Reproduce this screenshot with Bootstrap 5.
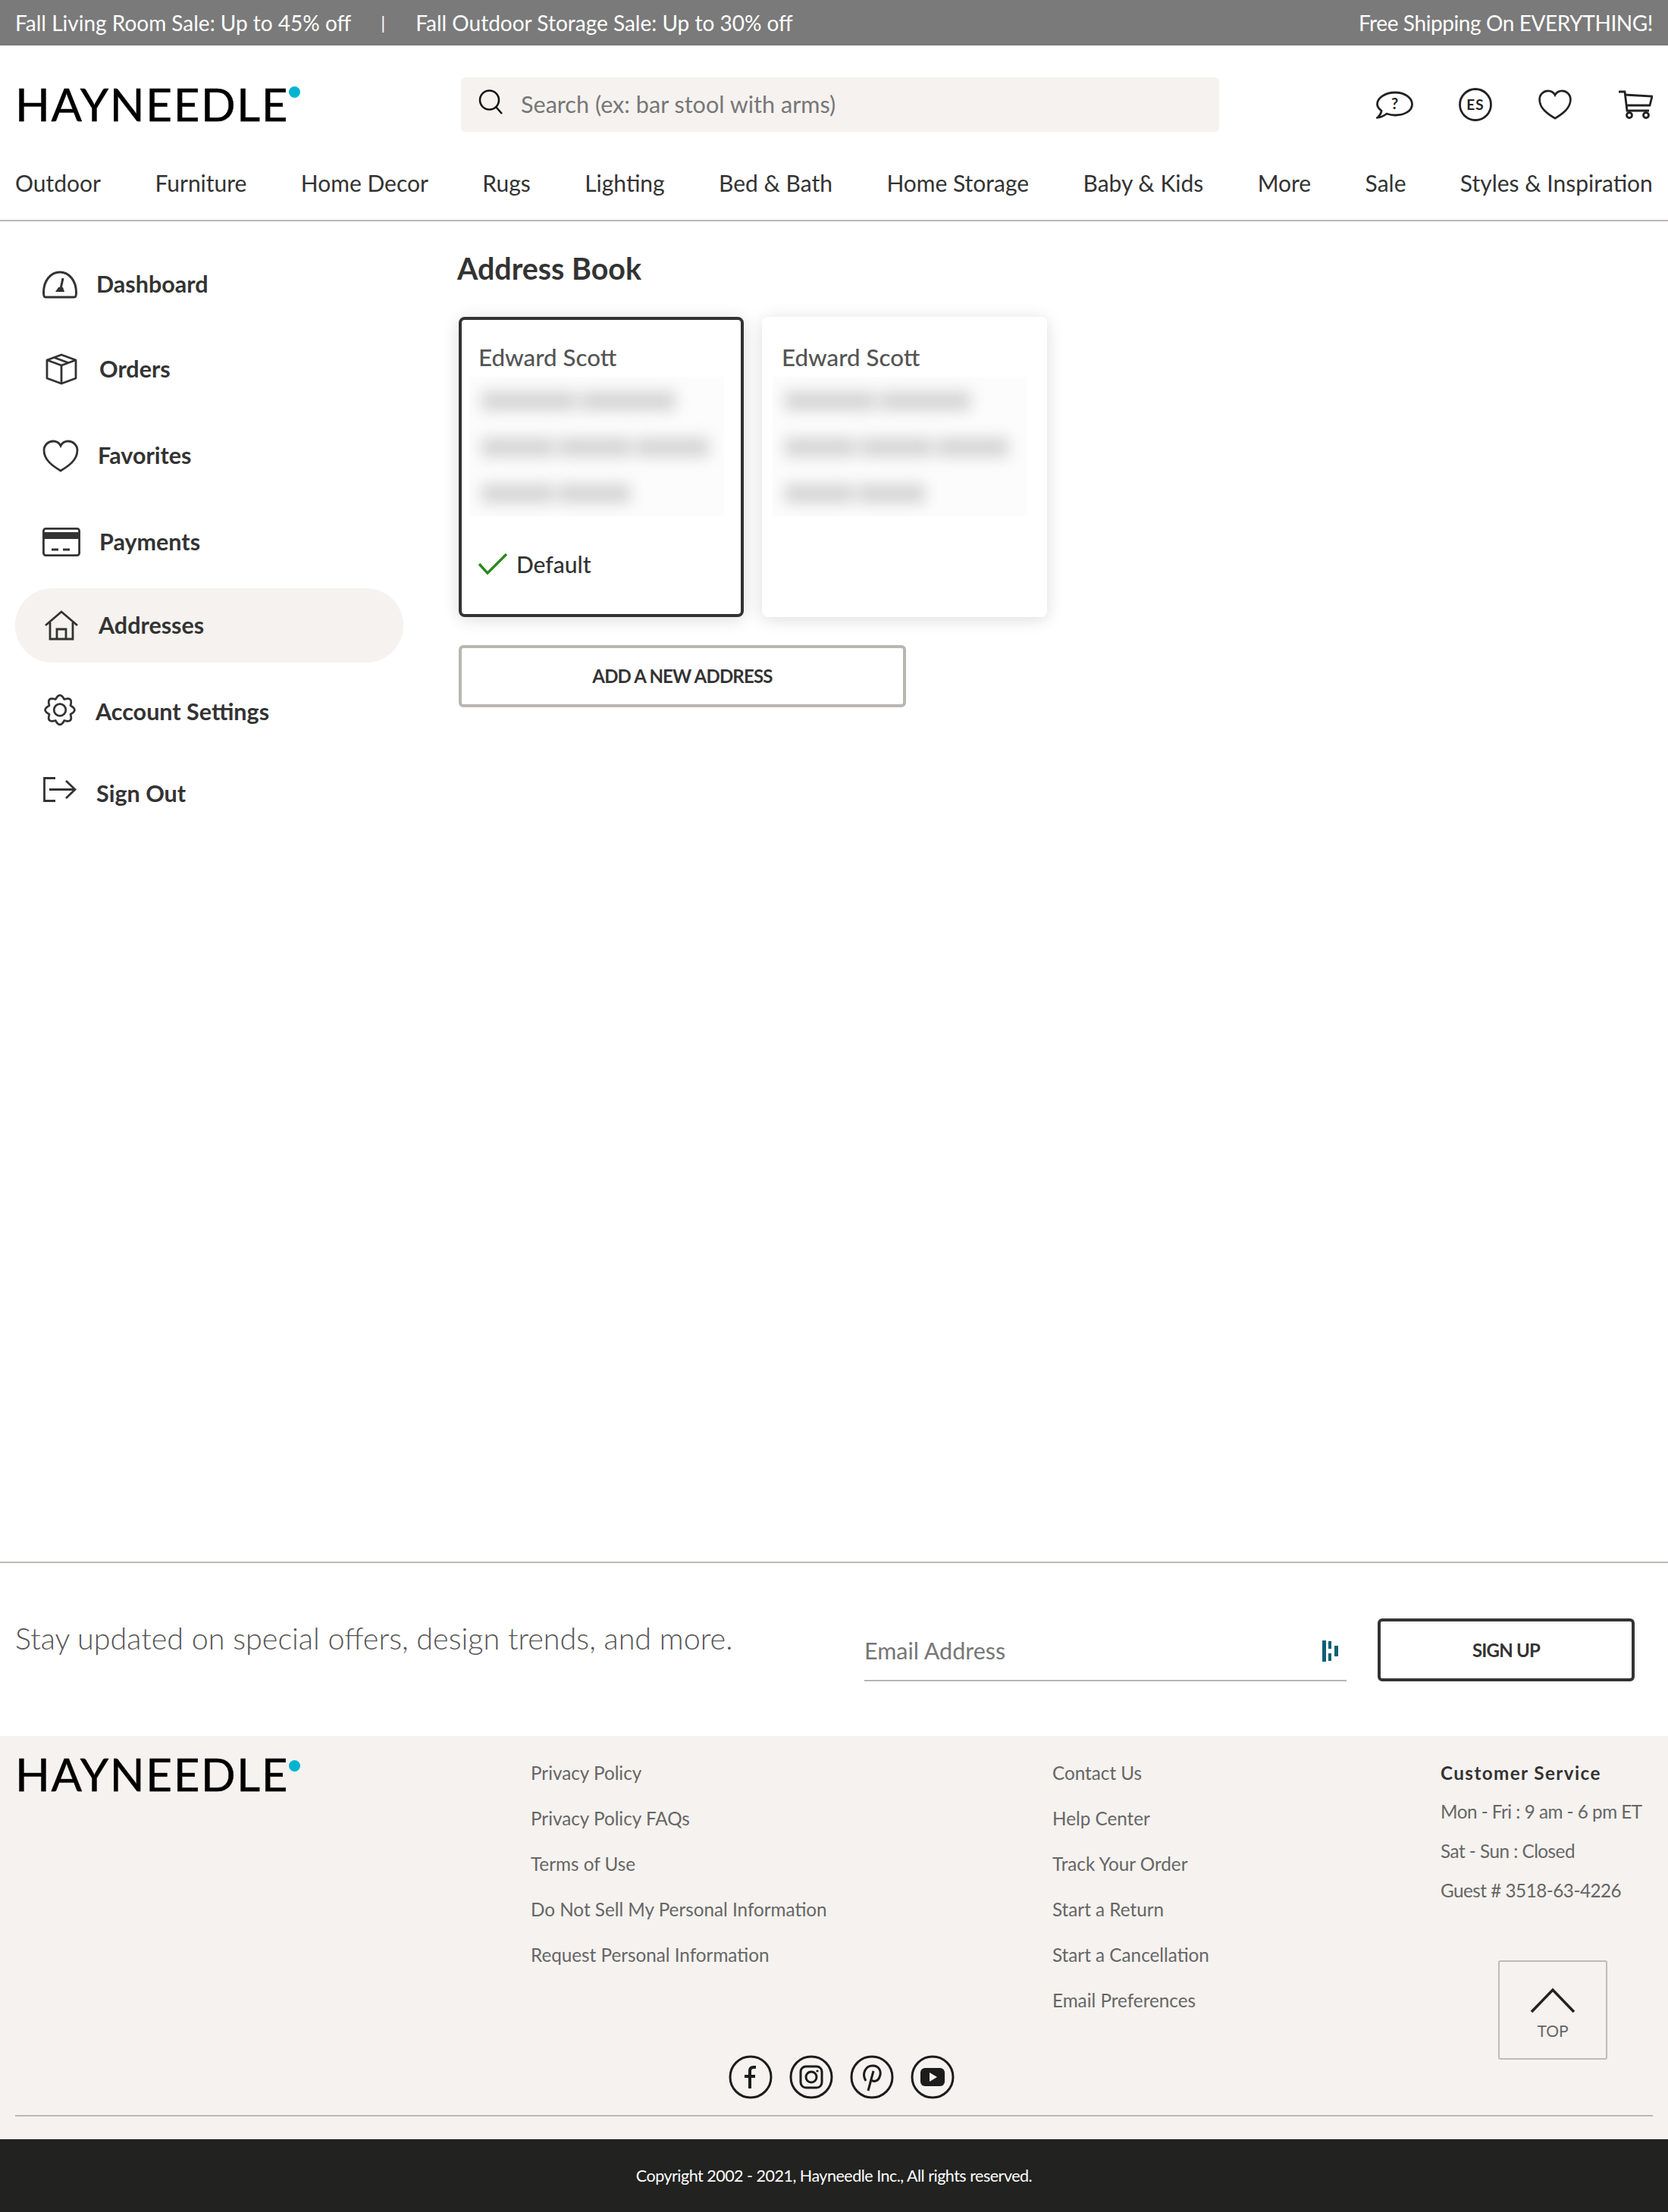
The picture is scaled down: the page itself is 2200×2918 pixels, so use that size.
<!DOCTYPE html>
<html lang="en">
<head>
  <meta charset="UTF-8" />
  <meta name="viewport" content="width=device-width, initial-scale=1">
  <title>Hayneedle - Address Book</title>
  <link href="https://cdn.jsdelivr.net/npm/bootstrap@5.3.0/dist/css/bootstrap.min.css" rel="stylesheet">
  <style>
    body {
      font-family: Lato, "Noto Sans", sans-serif;
      color: #333;
      background: #fff;
    }
    a { color: inherit; text-decoration: none; }
    .promoBar {
      height: 60px;
      padding: 0 20px;
      background: #7a7a7a;
      color: #fff;
      font-size: 28px;
    }
    .promoSep { margin: 0 40px 0 39px; font-size: 24px; }
    .promoRight { letter-spacing: -.4px; }
    .logoText {
      font-size: 60px;
      line-height: 60px;
      color: #000;
      letter-spacing: 1.7px;
      white-space: nowrap;
      -webkit-text-stroke: .5px #000;
    }
    .logoDot {
      width: 15px;
      height: 15px;
      border-radius: 50%;
      background: #00b4d0;
      margin: 12px 0 0 0;
      flex: none;
    }
    .headerRow { height: 156px; padding: 42px 20px 42px 20px; }
    .logoBox { width: 588px; height: 72px; }
    .logoBox .logoText { margin-top: -2px; }
    .searchBox {
      width: 1000px;
      height: 72px;
      padding-left: 23px;
      background: #f5f2ef;
      border-radius: 6px;
      color: #777;
      font-size: 30.6px;
    }
    .searchBox svg { margin-right: 23px; margin-top: -8px; }
    .headerIcons { margin-left: auto; gap: 60px; }
    .mainNav {
      height: 76px;
      padding: 0 20px 24px 20px;
      border-bottom: 2px solid #bdb8b3;
      font-size: 30px;
      color: #333;
    }
    .pageBody { min-height: 1768px; }
    .sideMenu { width: 603px; padding: 34px 0 0 20px; flex: none; }
    .sideItem {
      width: 512px;
      height: 98px;
      padding-left: 36px;
      border-radius: 49px;
      font-size: 30.5px;
      font-weight: 700;
      color: #333;
    }
    .sideItem svg { flex: none; }
    .sideItem.isActive { background: #f5f2ef; }
    .sideItem:nth-child(1) svg { margin-right: 25px; }
    .sideItem:nth-child(2) { margin-top: 14px; padding-left: 40px; }
    .sideItem:nth-child(2) svg { margin-right: 29px; }
    .sideItem:nth-child(3) { margin-top: 16px; }
    .sideItem:nth-child(3) svg { margin-right: 25px; }
    .sideItem:nth-child(4) { margin-top: 16px; }
    .sideItem:nth-child(4) svg { margin-right: 25px; }
    .sideItem:nth-child(5) { margin-top: 12px; padding-left: 39px; }
    .sideItem:nth-child(5) svg { margin-right: 27px; }
    .sideItem:nth-child(6) { margin-top: 16px; }
    .sideItem:nth-child(6) svg { margin: -6px 24px 0 0; }
    .sideItem:nth-child(7) { margin-top: 10px; padding-left: 37px; }
    .sideItem:nth-child(7) svg { margin: -12px 26px 0 0; }
    .bookPane { padding-top: 38px; }
    .bookTitle {
      font-size: 39.4px;
      line-height: 48px;
      font-weight: 700;
      color: #333;
      margin: 0 0 40px 0;
    }
    .cardRow { padding-left: 2px; }
    .addrCard {
      width: 376px;
      height: 396px;
      padding: 29px 22px 0 22px;
      border: 4px solid transparent;
      border-radius: 8px;
      background: #fff;
      box-shadow: 0 3px 22px rgba(0, 0, 0, .14);
    }
    .addrCard.isDefault { border-color: #333; }
    .addrName {
      font-size: 31.3px;
      line-height: 40px;
      font-weight: 500;
      color: #555;
    }
    .addrBlur {
      height: 184px;
      margin: 6px 0 0 -12px;
      padding: 20px 0 0 16px;
      background: #fcfcfc;
      overflow: hidden;
    }
    .blurLine {
      height: 24px;
      margin-bottom: 37px;
      gap: 6px;
      filter: blur(10px);
    }
    .blurLine span { background: #d2d2d2; }
    .lineA { width: 256px; }
    .lineB { width: 300px; }
    .lineC { width: 196px; }
    .lineD { width: 245px; }
    .lineE { width: 295px; }
    .lineF { width: 185px; }
    .defaultMark {
      margin-top: 43px;
      font-size: 30px;
      line-height: 40px;
      font-weight: 500;
      color: #333;
    }
    .defaultMark svg { margin-right: 12px; }
    .plainBtn {
      font-size: 24px;
      letter-spacing: -.8px;
      font-weight: 700;
      color: #333;
      background: #fff;
      border-radius: 6px;
    }
    .addBtn {
      width: 590px;
      height: 82px;
      margin: 37px 0 0 2px;
      border: 4px solid #b9b6b2;
    }
    .newsBand {
      height: 230px;
      padding: 73px 44px 0 20px;
      border-top: 2px solid #bdb8b3;
    }
    .newsText {
      width: 1120px;
      font-size: 39.5px;
      line-height: 52px;
      font-weight: 300;
      color: #555;
      white-space: nowrap;
    }
    .emailField {
      width: 636px;
      height: 83px;
      padding: 5px 11px 0 0;
      border-bottom: 2px solid #b5b5b5;
      font-size: 30.5px;
      color: #777;
    }
    .signBtn {
      width: 339px;
      height: 83px;
      margin-left: 41px;
      border: 4px solid #333;
    }
    .footBand {
      height: 532px;
      padding: 19px 20px 0 20px;
      background: #f5f2ef;
    }
    .footCols {
      display: grid;
      grid-template-columns: 680px 688px 512px 1fr;
      height: 360px;
    }
    .footCols > div:first-child { padding-top: 1px; }
    .footLinks { font-size: 24.25px; line-height: 60px; color: #666; }
    .careBox {
      padding-top: 5px;
      font-size: 24.25px;
      line-height: 52px;
      letter-spacing: -.5px;
      color: #666;
      white-space: nowrap;
    }
    .careTitle { line-height: 50px; font-weight: 700; color: #333; letter-spacing: 1.4px; }
    .topBtn {
      position: absolute;
      left: 1976px;
      top: 296px;
      width: 144px;
      height: 131px;
      padding-top: 34px;
      border: 2px solid #c0bcb8;
      border-radius: 3px;
      font-size: 21px;
      line-height: 30px;
      color: #666;
    }
    .socialRow { margin-top: 41px; padding-left: 20px; gap: 22px; }
    .footRule {
      height: 2px;
      margin-top: 20px;
      background: #bdb8b3;
    }
    .copyBar {
      height: 96px;
      background: #222220;
      color: #fff;
      font-size: 21.5px;
      letter-spacing: -.5px;
    }
    svg { display: block; }
    svg text { font-family: Lato, sans-serif; }
  </style>
</head>
<body>
  <div class="promoBar d-flex align-items-center justify-content-between">
    <div class="d-flex align-items-center">
      <span>Fall Living Room Sale: Up to 45% off</span>
      <span class="promoSep">|</span>
      <span>Fall Outdoor Storage Sale: Up to 30% off</span>
    </div>
    <span class="promoRight">Free Shipping On EVERYTHING!</span>
  </div>

  <header>
    <div class="headerRow d-flex align-items-center">
      <div class="logoBox d-flex align-items-center">
        <span class="logoText">HAYNEEDLE</span><span class="logoDot align-self-start"></span>
      </div>
      <div class="searchBox d-flex align-items-center">
        <svg width="33" height="33" viewBox="0 0 33 33" fill="none" stroke="#111" stroke-width="2.5"><circle cx="14.5" cy="14" r="12.5"/><path d="M23.5 23.5 L31 32"/></svg>
        <span>Search (ex: bar stool with arms)</span>
      </div>
      <div class="headerIcons d-flex align-items-center">
        <svg width="49" height="37" viewBox="0 0 49 37" fill="none" stroke="#222" stroke-width="2.8"><path d="M25 2 C38 2 47.5 9 47.5 17.5 C47.5 26 38 32 25 32 C20 32 17 31 14 30 C10 33 6 35 2 35 C5 32 7 29 7 26 C3 23 1.5 20 1.5 17.5 C1.5 9 12 2 25 2 Z"/><text x="24.5" y="24" text-anchor="middle" font-size="20" font-weight="700" fill="#222" stroke="none">?</text></svg>
        <svg width="44" height="44" viewBox="0 0 44 44" fill="none" stroke="#222" stroke-width="2.8"><circle cx="22" cy="22" r="20.5"/><text x="22" y="29" text-anchor="middle" font-size="19" font-weight="700" fill="#222" stroke="none" letter-spacing="1">ES</text></svg>
        <svg width="46" height="40" viewBox="0 0 48 43" fill="none" stroke="#222" stroke-width="2.8"><path d="M24 41 C14 35 2 27 2 14 C2 7 8 2 14 2 C18 2 22 4 24 8 C26 4 30 2 34 2 C40 2 46 7 46 14 C46 27 34 35 24 41 Z"/></svg>
        <svg width="46" height="38" viewBox="0 0 46 38" fill="none" stroke="#222" stroke-width="2.8"><path d="M1 2 L9 2 L12 27 L41 27"/><path d="M9 6 L45 8 L42 20 L11 20"/><circle cx="15" cy="33" r="3.5"/><circle cx="37" cy="33" r="3.5"/></svg>
      </div>
    </div>
    <nav class="mainNav d-flex align-items-center justify-content-between">
      <a href="#">Outdoor</a>
      <a href="#">Furniture</a>
      <a href="#">Home Decor</a>
      <a href="#">Rugs</a>
      <a href="#">Lighting</a>
      <a href="#">Bed &amp; Bath</a>
      <a href="#">Home Storage</a>
      <a href="#">Baby &amp; Kids</a>
      <a href="#">More</a>
      <a href="#">Sale</a>
      <a href="#">Styles &amp; Inspiration</a>
    </nav>
  </header>

  <main class="pageBody d-flex">
    <aside class="sideMenu">
      <a href="#" class="sideItem d-flex align-items-center">
        <svg width="46" height="37" viewBox="0 0 46 37" fill="none" stroke="#333" stroke-width="3"><path d="M4 35 H42 Q44.5 35 44.5 29 C44.5 13 35 2 23 2 C11 2 1.5 13 1.5 29 Q1.5 35 4 35 Z"/><path d="M27 10 L24 24"/><path d="M17 28 H29 L27 22 H21 Z" fill="#333" stroke="none"/></svg>
        <span>Dashboard</span>
      </a>
      <a href="#" class="sideItem d-flex align-items-center">
        <svg width="42" height="42" viewBox="0 0 42 42" fill="none" stroke="#333" stroke-width="2.8" stroke-linejoin="round"><path d="M21 2 L40 9 V33 L21 40 L2 33 V9 Z"/><path d="M2 9 L21 16 L40 9"/><path d="M21 16 V40"/><path d="M11 5.5 L30 12.5"/></svg>
        <span>Orders</span>
      </a>
      <a href="#" class="sideItem d-flex align-items-center">
        <svg width="48" height="43" viewBox="0 0 48 43" fill="none" stroke="#333" stroke-width="2.8"><path d="M24 41 C14 35 2 27 2 14 C2 7 8 2 14 2 C18 2 22 4 24 8 C26 4 30 2 34 2 C40 2 46 7 46 14 C46 27 34 35 24 41 Z"/></svg>
        <span>Favorites</span>
      </a>
      <a href="#" class="sideItem d-flex align-items-center">
        <svg width="50" height="38" viewBox="0 0 50 38" fill="none" stroke="#333" stroke-width="2.8"><rect x="1.4" y="1.4" width="47.2" height="35.2" rx="3"/><rect x="1" y="6" width="48" height="9" fill="#333" stroke="none"/><path d="M12 29 H21 M27 29 H36"/></svg>
        <span>Payments</span>
      </a>
      <a href="#" class="sideItem isActive d-flex align-items-center">
        <svg width="44" height="40" viewBox="0 0 44 40" fill="none" stroke="#333" stroke-width="2.8"><path d="M1 20 L22 2 L43 20"/><path d="M7 16 V38 H37 V16"/><path d="M16 38 V25 H28 V38"/></svg>
        <span>Addresses</span>
      </a>
      <a href="#" class="sideItem d-flex align-items-center">
        <svg width="46" height="47" viewBox="-2 -2 50 50" fill="none" stroke="#333" stroke-width="3" stroke-linejoin="round"><path d="M38.2 16.7 Q50 23 38.2 29.3 Q42.1 42.1 29.3 38.2 Q23 50 16.7 38.2 Q3.9 42.1 7.8 29.3 Q-4 23 7.8 16.7 Q3.9 3.9 16.7 7.8 Q23 -4 29.3 7.8 Q42.1 3.9 38.2 16.7 Z"/><circle cx="23" cy="23" r="8.5"/></svg>
        <span>Account Settings</span>
      </a>
      <a href="#" class="sideItem d-flex align-items-center">
        <svg width="44" height="33" viewBox="0 0 44 33" fill="none" stroke="#333" stroke-width="2.8"><path d="M16 1.5 H1.5 V31.5 H16"/><path d="M8 16.5 H42"/><path d="M30 5 L42 16.5 L30 28"/></svg>
        <span>Sign Out</span>
      </a>
    </aside>

    <section class="bookPane">
      <h1 class="bookTitle">Address Book</h1>
      <div class="cardRow d-flex gap-4">
        <div class="addrCard isDefault">
          <div class="addrName">Edward Scott</div>
          <div class="addrBlur">
            <div class="blurLine lineA d-flex"><span class="flex-grow-1"></span><span class="flex-grow-1"></span></div>
            <div class="blurLine lineB d-flex"><span class="flex-grow-1"></span><span class="flex-grow-1"></span><span class="flex-grow-1"></span></div>
            <div class="blurLine lineC d-flex"><span class="flex-grow-1"></span><span class="flex-grow-1"></span></div>
          </div>
          <div class="defaultMark d-flex align-items-center">
            <svg width="38" height="28" viewBox="0 0 38 28" fill="none" stroke="#2a8a1e" stroke-width="3.4"><path d="M1 14 L12 26 L37 1"/></svg>
            <span>Default</span>
          </div>
        </div>
        <div class="addrCard">
          <div class="addrName">Edward Scott</div>
          <div class="addrBlur">
            <div class="blurLine lineD d-flex"><span class="flex-grow-1"></span><span class="flex-grow-1"></span></div>
            <div class="blurLine lineE d-flex"><span class="flex-grow-1"></span><span class="flex-grow-1"></span><span class="flex-grow-1"></span></div>
            <div class="blurLine lineF d-flex"><span class="flex-grow-1"></span><span class="flex-grow-1"></span></div>
          </div>
        </div>
      </div>
      <button type="button" class="plainBtn addBtn d-block">ADD A NEW ADDRESS</button>
    </section>
  </main>

  <section class="newsBand d-flex align-items-start">
    <div class="newsText">Stay updated on special offers, design trends, and more.</div>
    <div class="emailField d-flex align-items-center justify-content-between">
      <span>Email Address</span>
      <svg width="21" height="28" viewBox="0 0 21 28" fill="#0d6073"><rect x="0" y="0" width="5" height="28"/><rect x="8" y="1" width="4" height="10"/><rect x="8" y="17" width="4" height="10"/><rect x="16" y="7" width="5" height="14"/></svg>
    </div>
    <button type="button" class="plainBtn signBtn">SIGN UP</button>
  </section>

  <footer>
    <div class="footBand position-relative">
      <div class="footCols">
        <div class="d-flex align-items-start">
          <span class="logoText">HAYNEEDLE</span><span class="logoDot"></span>
        </div>
        <div class="footLinks d-flex flex-column">
          <a href="#">Privacy Policy</a>
          <a href="#">Privacy Policy FAQs</a>
          <a href="#">Terms of Use</a>
          <a href="#">Do Not Sell My Personal Information</a>
          <a href="#">Request Personal Information</a>
        </div>
        <div class="footLinks d-flex flex-column">
          <a href="#">Contact Us</a>
          <a href="#">Help Center</a>
          <a href="#">Track Your Order</a>
          <a href="#">Start a Return</a>
          <a href="#">Start a Cancellation</a>
          <a href="#">Email Preferences</a>
        </div>
        <div class="careBox">
          <div class="careTitle">Customer Service</div>
          <div>Mon - Fri : 9 am - 6 pm ET</div>
          <div>Sat - Sun : Closed</div>
          <div>Guest # 3518-63-4226</div>
        </div>
      </div>
      <a href="#" class="topBtn d-flex flex-column align-items-center">
        <svg width="60" height="34" viewBox="0 0 60 34" fill="none" stroke="#222" stroke-width="3.5"><path d="M2 32 L30 3 L58 32"/></svg>
        <span class="mt-2">TOP</span>
      </a>
      <div class="socialRow d-flex justify-content-center">
        <svg width="58" height="60" viewBox="0 0 58 60" fill="none" stroke="#1c1c1c" stroke-width="3"><circle cx="29" cy="30" r="27"/><path d="M36 17 H33 Q28 17 28 22 V45 M21 29 H35" stroke-width="4"/></svg>
        <svg width="58" height="60" viewBox="0 0 58 60" fill="none" stroke="#1c1c1c" stroke-width="3"><circle cx="29" cy="30" r="27"/><rect x="15" y="16" width="28" height="28" rx="7"/><circle cx="29" cy="30" r="7"/><circle cx="37" cy="22" r="1.6" fill="#1c1c1c" stroke="none"/></svg>
        <svg width="58" height="60" viewBox="0 0 58 60" fill="none" stroke="#1c1c1c" stroke-width="3"><circle cx="29" cy="30" r="27"/><path d="M21 35 C15 25 21 15 30 15 C39 15 42 23 39 30 C37 36 30 37 27 33 M31 22 L24 48"/></svg>
        <svg width="58" height="60" viewBox="0 0 58 60" fill="none" stroke="#1c1c1c" stroke-width="3"><circle cx="29" cy="30" r="27"/><rect x="13" y="18" width="32" height="24" rx="6" fill="#1c1c1c" stroke="none"/><path d="M25 24 L35 30 L25 36 Z" fill="#f5f2ef" stroke="none"/></svg>
      </div>
      <div class="footRule"></div>
    </div>
    <div class="copyBar d-flex align-items-center justify-content-center">Copyright 2002 - 2021, Hayneedle Inc., All rights reserved.</div>
  </footer>
</body>
</html>
